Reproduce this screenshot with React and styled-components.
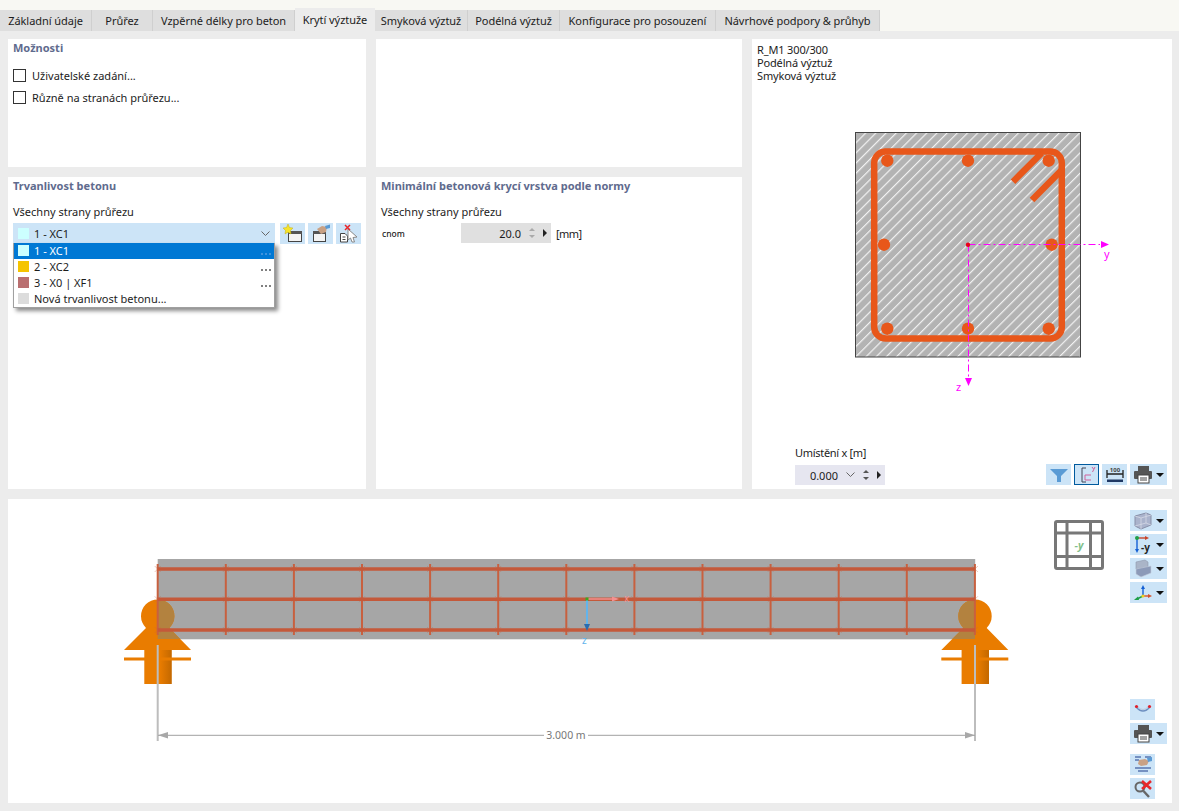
import styled, { createGlobalStyle } from "styled-components";

const GlobalStyle = createGlobalStyle`
  html, body {
    margin: 0;
    padding: 0;
    background: #ececec;
    font-family: "Noto Sans", "Liberation Sans", sans-serif;
    font-size: 11px;
    color: #1c1c1c;
  }
`;

const Page = styled.div`
  width: 1179px;
  height: 811px;
  overflow: hidden;
  display: flex;
  flex-direction: column;
  background: #ececec;
`;

const TabStrip = styled.div`
  height: 21px;
  padding-top: 10px;
  background: #f8f8f3;
  display: flex;
  align-items: stretch;
`;

const Tab = styled.div`
  width: ${(p) => p.$w}px;
  box-sizing: border-box;
  display: flex;
  align-items: center;
  justify-content: center;
  white-space: nowrap;
  letter-spacing: -0.05px;
  border-right: 1px solid #cfcfcf;
  background: ${(p) => (p.$active ? "#ececec" : "#dedede")};
  margin-top: ${(p) => (p.$active ? "-2px" : "0")};
  ${(p) => p.$active && "border-right: none;"}
`;

const Content = styled.div`
  flex: 1;
  padding: 8px 7px 8px 8px;
  display: grid;
  grid-template-columns: 358px 366px 420px;
  grid-template-rows: 128px 312px 304px;
  gap: 10px;
`;

const Panel = styled.div`
  background: #fff;
  padding: 1px 5px 4px;
  position: relative;
  display: flex;
  flex-direction: column;
  min-width: 0;
`;

const RightPanel = styled(Panel)`
  grid-column: 3;
  grid-row: 1 / span 2;
  padding-top: 4px;
`;

const BottomPanel = styled.div`
  grid-column: 1 / span 3;
  background: #fff;
  position: relative;
  overflow: hidden;
`;

const Title = styled.div`
  font-weight: 700;
  line-height: 15px;
  color: #5f6b8e;
`;

const Label = styled.div`
  line-height: 14px;
  margin-top: 12px;
`;

const CheckRow = styled.label`
  display: flex;
  align-items: center;
  gap: 6px;
  height: 13px;
  margin-top: ${(p) => p.$top}px;
`;

const CheckBox = styled.span`
  width: 13px;
  height: 13px;
  box-sizing: border-box;
  border: 1px solid #333;
  background: #fff;
`;

const ComboRow = styled.div`
  display: flex;
  gap: 3px;
  margin-top: 4px;
  position: relative;
`;

const Combo = styled.div`
  width: 262px;
  height: 21px;
  margin-right: 2px;
  background: #cce4f7;
  display: flex;
  align-items: center;
  padding: 0 5px;
  box-sizing: border-box;
  gap: 5px;
`;

const Swatch = styled.span`
  width: 11px;
  height: 11px;
  flex: none;
  background: ${(p) => p.$color};
`;

const ComboText = styled.span`
  flex: 1;
`;

const DropList = styled.div`
  position: absolute;
  top: 20px;
  left: 0;
  width: 262px;
  box-sizing: border-box;
  background: #fff;
  border: 1px solid #a0a0a0;
  border-top: none;
  box-shadow: 3px 3px 4px rgba(0, 0, 0, 0.45);
`;

const DropItem = styled.div`
  height: 16px;
  box-sizing: border-box;
  padding: 0 4px 1px;
  display: flex;
  align-items: center;
  gap: 5px;
  position: relative;
  background: ${(p) => (p.$selected ? "#0078d4" : "#fff")};
  color: ${(p) => (p.$selected ? "#fff" : "#1c1c1c")};
`;

const Dots = styled.span`
  position: absolute;
  right: 3px;
  bottom: 4px;
  display: flex;
  gap: 2px;
`;

const Dot = styled.span`
  width: 2px;
  height: 2px;
  background: ${(p) => (p.$selected ? "#3f93dd" : "#808080")};
`;

const IconButton = styled.div`
  width: ${(p) => (p.$wide ? 37 : 25)}px;
  height: 21px;
  flex: none;
  box-sizing: border-box;
  background: #cce4f7;
  display: flex;
  align-items: center;
  justify-content: flex-start;
  gap: 3px;
  padding-left: ${(p) => (p.$outlined ? 2 : 3)}px;
  border: ${(p) => (p.$outlined ? "1px solid #005a9e" : "none")};
  margin-top: ${(p) => p.$top || 0}px;
`;

const Caret = styled.span`
  width: 0;
  height: 0;
  border-left: 4px solid transparent;
  border-right: 4px solid transparent;
  border-top: 4px solid #111;
`;

const NomRow = styled.div`
  display: flex;
  align-items: center;
  margin-top: 4px;
  height: 20px;
`;

const NomLabel = styled.span`
  width: 80px;
  font-size: 8.5px;
  font-weight: 500;
  padding-left: 1px;
  box-sizing: border-box;
`;

const Spin = styled.div`
  width: 90px;
  height: 20px;
  box-sizing: border-box;
  background: ${(p) => p.$bg};
  display: flex;
  align-items: center;
  justify-content: flex-end;
  padding-right: 4px;
  gap: 8px;
`;

const SpinArrows = styled.span`
  display: flex;
  flex-direction: column;
  gap: 4px;
`;

const Tri = styled.span`
  width: 0;
  height: 0;
  border-left: 3px solid transparent;
  border-right: 3px solid transparent;
  ${(p) => (p.$down ? "border-top" : "border-bottom")}: 3px solid ${(p) => p.$color};
`;

const TriRight = styled.span`
  width: 0;
  height: 0;
  border-top: 4px solid transparent;
  border-bottom: 4px solid transparent;
  border-left: 4px solid #222;
`;

const Unit = styled.span`
  margin-left: 5px;
  letter-spacing: -0.6px;
`;

const Lines = styled.div`
  line-height: 13px;
  letter-spacing: -0.15px;
`;

const Figure = styled.svg`
  display: block;
  margin: 43px 0 0 88px;
`;

const FigureFooter = styled.div`
  margin-top: auto;
  display: flex;
  justify-content: space-between;
  align-items: flex-end;
  padding-left: 38px;
`;

const LocLabel = styled.div`
  line-height: 14px;
  margin-bottom: 5px;
  letter-spacing: -0.3px;
`;

const ButtonRow = styled.div`
  display: flex;
  gap: 3px;
`;

const Canvas = styled.svg`
  position: absolute;
  inset: 0;
  display: block;
`;

const ToolColumn = styled.div`
  position: absolute;
  left: 1122px;
  top: ${(p) => p.$top}px;
  display: flex;
  flex-direction: column;
  gap: 3px;
`;

const Ico = ({ children }) => (
  <svg width="20" height="19" viewBox="0 0 20 19">
    {children}
  </svg>
);

const Chevron = () => (
  <svg width="9" height="6" viewBox="0 0 9 6">
    <path d="M0.5 0.5 L4.5 4.5 L8.5 0.5" fill="none" stroke="#666" />
  </svg>
);

const NewIcon = () => (
  <Ico>
    <rect x="5.5" y="7.5" width="13" height="10" fill="#f4f4f4" stroke="#444" />
    <rect x="5" y="7" width="14" height="3" fill="#555" />
    <polygon points="5,0 6.5,3.5 10,4 7.5,6.5 8,10 5,8.2 2,10 2.5,6.5 0,4 3.5,3.5" fill="#f7e32a" stroke="#b9a400" strokeWidth="0.4" />
  </Ico>
);

const EditIcon = () => (
  <Ico>
    <rect x="2.5" y="7.5" width="12" height="10" fill="#f4f4f4" stroke="#444" />
    <rect x="2" y="7" width="13" height="3" fill="#555" />
    <path d="M6 5 L11 2 L16 3 L15 8 L10 10 Z" fill="#c9a184" />
    <path d="M14 2 L19 0.5 L19 4 L15 5 Z" fill="#5a9bd5" />
  </Ico>
);

const DeleteIcon = () => (
  <Ico>
    <path d="M1.5 9.5 H6 L8.5 12 V18 H1.5 Z" fill="#fff" stroke="#444" />
    <path d="M3.5 13 H6.5 M3.5 15.5 H6.5" stroke="#444" />
    <path d="M9 5 L18 13 L14 13.5 L15.5 18 L13 18 L11.5 14 L9 16 Z" fill="#fff" stroke="#888" />
    <path d="M6 1 L11 6 M11 1 L6 6" stroke="#e8262a" strokeWidth="1.5" />
  </Ico>
);

const FilterIcon = () => (
  <Ico>
    <path d="M1 4 H19 L12 11 V17 H8 V11 Z" fill="#5a9bd5" />
  </Ico>
);

const AxesIcon = () => (
  <Ico>
    <path d="M9 3 H5 V17 H9" fill="none" stroke="#445" />
    <path d="M8 10 H14 M8 10 V15 M8 15 H14" stroke="#d0609a" />
    <path d="M15 2 L16.5 4 M18 2 L15.5 7" stroke="#d0609a" />
  </Ico>
);

const DimIcon = () => (
  <Ico>
    <path d="M2 5 V13 M18 5 V13 M2 9 H18" stroke="#222" strokeWidth="1.3" fill="none" />
    <rect x="2" y="14.5" width="16" height="2.5" fill="#1f3864" />
    <text x="10" y="7" textAnchor="middle" fontSize="6" fontWeight="700" fill="#444" fontFamily="Noto Sans, sans-serif">100</text>
  </Ico>
);

const PrintIcon = () => (
  <Ico>
    <rect x="5" y="1" width="11" height="5" fill="#555" />
    <rect x="1" y="6" width="18" height="8" rx="1" fill="#555" />
    <rect x="5" y="10" width="11" height="8" fill="#fff" stroke="#444" />
    <path d="M7 13 H14 M7 15 H14" stroke="#444" />
  </Ico>
);

const CubeIcon = () => (
  <Ico>
    <path d="M2 5 L13 2 L18 4 V14 L8 18 L2 15 Z" fill="#aab3cc" stroke="#8890a8" />
    <path d="M2 5 L8 7 L18 4 M8 7 V18 M2 15 L13 12 V2 M13 12 L18 14" fill="none" stroke="#d5d9e6" strokeWidth="0.8" />
  </Ico>
);

const AxisYIcon = () => (
  <Ico>
    <path d="M4 3 H13" stroke="#c8452a" strokeWidth="1.4" />
    <path d="M12 1 L16 3 L12 5 Z" fill="#c8452a" />
    <path d="M4 3 V15" stroke="#1560d4" strokeWidth="1.4" />
    <path d="M2 14 L4 18 L6 14 Z" fill="#1560d4" />
    <circle cx="4" cy="3" r="2" fill="#1fa04a" />
    <text x="8" y="16" fontSize="10" fontWeight="700" fill="#222" fontFamily="Noto Sans, sans-serif">-y</text>
  </Ico>
);

const SlabIcon = () => (
  <Ico>
    <path d="M3 3 L12 1 L15 3 V8 L3 10 Z" fill="#aab5c8" stroke="#8e99ad" strokeWidth="0.6" />
    <path d="M3 10 L18 7 V14 L8 18 L3 15 Z" fill="#8c9ab8" stroke="#c4ccdc" strokeWidth="0.6" />
  </Ico>
);

const TriadIcon = () => (
  <Ico>
    <path d="M10 13 V5" stroke="#1560d4" strokeWidth="1.4" />
    <path d="M8 6 L10 2 L12 6 Z" fill="#1560d4" />
    <path d="M10 13 H16" stroke="#d6502a" strokeWidth="1.4" />
    <path d="M15 11 L19 13 L15 15 Z" fill="#d6502a" />
    <path d="M10 13 L4 16" stroke="#1fa04a" strokeWidth="1.4" />
    <path d="M5 13.5 L1 17 L6 17 Z" fill="#1fa04a" />
    <circle cx="10" cy="13" r="1.6" fill="#f0d020" />
  </Ico>
);

const DeflectionIcon = () => (
  <Ico>
    <path d="M3 7 Q10 15 17 7" stroke="#6d8fc0" strokeWidth="1.5" fill="none" />
    <path d="M5 7 Q10 12 15 7" stroke="#b9c8de" strokeWidth="1" fill="none" />
    <circle cx="3.5" cy="6.5" r="1.6" fill="#e0202a" />
    <circle cx="16.5" cy="6.5" r="1.6" fill="#e0202a" />
  </Ico>
);

const ReportIcon = () => (
  <Ico>
    <path d="M2 2 H8 M12 2 H18 M2 5 H6" stroke="#1f3f8c" />
    <path d="M6 5 L12 4 L16 6 L14 10 L8 11 L5 9 Z" fill="#c9a184" />
    <path d="M14 3 L19 2 V6 L15 7 Z" fill="#5a9bd5" />
    <path d="M2 13 H18 M5 16 H15" stroke="#1f3f8c" strokeWidth="1.2" />
  </Ico>
);

const ClearIcon = () => (
  <Ico>
    <circle cx="7" cy="8" r="4.5" fill="none" stroke="#666" strokeWidth="2" />
    <path d="M10.5 12 L16 18" stroke="#666" strokeWidth="2.4" />
    <path d="M9 2 L18 10 M18 2 L9 10" stroke="#e8262a" strokeWidth="2.6" />
  </Ico>
);

const BARS = [
  [887.3, 160.7], [968, 160.7], [1048.7, 160.7],
  [884, 244.7], [1051.7, 244.7],
  [887.3, 328.7], [968, 328.7], [1048.7, 328.7],
];

const MAGENTA = "#ff00ff";
const REBAR = "#e8571a";

const SectionDrawing = () => (
  <Figure width="280" height="270" viewBox="845 125 280 270">
    <defs>
      <pattern id="hatch" width="7.2" height="7.2" patternUnits="userSpaceOnUse" patternTransform="rotate(45)">
        <rect width="7.2" height="7.2" fill="#b3b3b3" />
        <rect width="1.2" height="7.2" fill="#f2f2f2" />
      </pattern>
    </defs>
    <rect x="855.5" y="132.5" width="225" height="224.5" fill="url(#hatch)" stroke="#444" />
    <path
      d="M885 151.5 H1050 A11.5 11.5 0 0 1 1061.8 163 V327 A11.5 11.5 0 0 1 1050 338.5 H886 A11.5 11.5 0 0 1 874.2 327 V163 A11.5 11.5 0 0 1 885 151.5 Z"
      fill="none"
      stroke={REBAR}
      strokeWidth="6.5"
    />
    <path d="M1041.7 153 L1013 181.7 M1061.7 170 L1032 200" stroke={REBAR} strokeWidth="6.5" fill="none" />
    {BARS.map(([x, y]) => (
      <circle key={`${x}-${y}`} cx={x} cy={y} r="6.2" fill={REBAR} />
    ))}
    <path d="M968.5 244.5 H1100 M968.5 244.5 V378" stroke={MAGENTA} strokeDasharray="7 3 2 3" fill="none" />
    <path d="M1101 241 L1109 244.5 L1101 248 Z M965 378 L968.5 386 L972 378 Z" fill={MAGENTA} />
    <circle cx="968" cy="244.7" r="2.2" fill="#e8001a" />
    <text x="1104" y="258" fontSize="11" fill={MAGENTA} fontFamily="Noto Sans, sans-serif">y</text>
    <text x="956" y="391" fontSize="11" fill={MAGENTA} fontFamily="Noto Sans, sans-serif">z</text>
  </Figure>
);

const SUPPORT = "M144.3 684 V650 H124 L146 628 A16.7 16.7 0 1 1 169.4 628 L191 650 H171.7 V684 Z";
const VERTICALS = Array.from({ length: 13 }, (_, i) => 157.7 + i * 68.1);
const HORIZONTALS = [569, 599.3, 630];

const Support = ({ x, clip }) => (
  <g transform={`translate(${x - 157.7} 0)`}>
    <path d={SUPPORT} fill="#e97c00" />
    <rect x="160" y="650" width="11.7" height="34" fill="url(#stemShade)" />
    <rect x="124" y="657.5" width="67" height="3" fill="#e97c00" />
    <g clipPath={clip}>
      <path d={SUPPORT} fill="#b3823f" />
    </g>
  </g>
);

const BeamView = () => (
  <Canvas width="1164" height="304" viewBox="8 499 1164 304">
    <defs>
      <clipPath id="leftOverlap">
        <rect x="157.7" y="559" width="60" height="80" />
      </clipPath>
      <clipPath id="rightOverlap">
        <rect x="97.7" y="559" width="60" height="80" />
      </clipPath>
      <linearGradient id="stemShade" x1="0" x2="1" y1="0" y2="0">
        <stop offset="0" stopColor="#8a4a00" stopOpacity="0" />
        <stop offset="1" stopColor="#8a4a00" stopOpacity="0.4" />
      </linearGradient>
    </defs>
    <rect x="157.7" y="559" width="817.5" height="80.3" fill="#a6a6a6" />
    <Support x={157.7} clip="url(#leftOverlap)" />
    <Support x={975} clip="url(#rightOverlap)" />
    {VERTICALS.map((x) => (
      <g key={x}>
        <path d={`M${x} 564 V635`} stroke="#c8603f" strokeWidth="2" />
        {HORIZONTALS.map((y) => (
          <path key={y} d={`M${x - 3} ${y - 3} L${x + 3} ${y + 3} M${x + 3} ${y - 3} L${x - 3} ${y + 3}`} stroke="#c8603f" strokeOpacity="0.35" />
        ))}
      </g>
    ))}
    {HORIZONTALS.map((y) => (
      <path key={y} d={`M157.7 ${y} H975`} stroke="#c4593a" strokeWidth="3.6" />
    ))}
    <path d="M157.7 645 V741 M975 645 V741" stroke="#bdbdbd" strokeWidth="2" />
    <path d="M158 735.3 H544 M588 735.3 H975" stroke="#a0a0a0" />
    <path d="M158 735.3 L168 732 V738.6 Z M975 735.3 L965 732 V738.6 Z" fill="#a8a8a8" />
    <text x="566" y="739" textAnchor="middle" fontSize="10.5" fill="#777" fontFamily="Noto Sans, sans-serif">3.000 m</text>

    <path d="M587 599 H614" stroke="#f49090" strokeWidth="1.5" />
    <path d="M612 596.5 L619 599 L612 601.5 Z" fill="#f49090" />
    <path d="M587 599 V626" stroke="#62b4ec" strokeWidth="2" />
    <path d="M584 624 L587 631 L590 624 Z" fill="#2a6cb0" />
    <rect x="585.5" y="597.5" width="3" height="3" fill="#3aa820" />
    <text x="624" y="602" fontSize="10" fill="#f49090" fontFamily="Noto Sans, sans-serif">x</text>
    <text x="582" y="644" fontSize="10" fill="#62b4ec" fontFamily="Noto Sans, sans-serif">z</text>

    <g stroke="#777" strokeWidth="3" fill="none" strokeLinejoin="round">
      <rect x="1055.5" y="521.5" width="47" height="47" rx="1.5" />
      <path d="M1067 521.5 V568.5 M1090.5 521.5 V568.5 M1055.5 533 H1102.5 M1055.5 556.5 H1102.5" />
    </g>
    <text x="1079" y="549" textAnchor="middle" fontSize="10.5" fontWeight="700" fontStyle="italic" fill="#7fbf8a" fontFamily="Noto Sans, sans-serif">-y</text>
  </Canvas>
);

const TABS = [
  ["Základní údaje", 92],
  ["Průřez", 61],
  ["Vzpěrné délky pro beton", 142],
  ["Krytí výztuže", 80],
  ["Smyková výztuž", 93],
  ["Podélná výztuž", 92],
  ["Konfigurace pro posouzení", 156],
  ["Návrhové podpory & průhyb", 164],
];

const DURABILITY = [
  { name: "1 - XC1", color: "#ccffff", selected: true, dots: true },
  { name: "2 - XC2", color: "#f5c400", dots: true },
  { name: "3 - X0 | XF1", color: "#b96f70", dots: true },
  { name: "Nová trvanlivost betonu...", color: "#dcdcdc" },
];

export default function App() {
  return (
    <Page>
      <GlobalStyle />
      <TabStrip>
        {TABS.map(([name, w]) => (
          <Tab key={name} $w={w} $active={name === "Krytí výztuže"}>
            {name}
          </Tab>
        ))}
      </TabStrip>
      <Content>
        <Panel>
          <Title>Možnosti</Title>
          <CheckRow $top={14}>
            <CheckBox />
            Uživatelské zadání...
          </CheckRow>
          <CheckRow $top={9}>
            <CheckBox />
            Různě na stranách průřezu...
          </CheckRow>
        </Panel>
        <Panel />
        <RightPanel>
          <Lines>
            <div>R_M1 300/300</div>
            <div>Podélná výztuž</div>
            <div>Smyková výztuž</div>
          </Lines>
          <SectionDrawing />
          <FigureFooter>
            <div>
              <LocLabel>Umístění x [m]</LocLabel>
              <Spin $bg="#e6e6f0">
                0.000
                <Chevron />
                <SpinArrows>
                  <Tri $color="#555" />
                  <Tri $down $color="#555" />
                </SpinArrows>
                <TriRight />
              </Spin>
            </div>
            <ButtonRow>
              <IconButton><FilterIcon /></IconButton>
              <IconButton $outlined><AxesIcon /></IconButton>
              <IconButton><DimIcon /></IconButton>
              <IconButton $wide><PrintIcon /><Caret /></IconButton>
            </ButtonRow>
          </FigureFooter>
        </RightPanel>
        <Panel>
          <Title>Trvanlivost betonu</Title>
          <Label>Všechny strany průřezu</Label>
          <ComboRow>
            <Combo>
              <Swatch $color="#ccffff" />
              <ComboText>1 - XC1</ComboText>
              <Chevron />
            </Combo>
            <IconButton><NewIcon /></IconButton>
            <IconButton><EditIcon /></IconButton>
            <IconButton><DeleteIcon /></IconButton>
            <DropList>
              {DURABILITY.map((item) => (
                <DropItem key={item.name} $selected={item.selected}>
                  <Swatch $color={item.color} />
                  {item.name}
                  {item.dots && (
                    <Dots>
                      <Dot $selected={item.selected} />
                      <Dot $selected={item.selected} />
                      <Dot $selected={item.selected} />
                    </Dots>
                  )}
                </DropItem>
              ))}
            </DropList>
          </ComboRow>
        </Panel>
        <Panel>
          <Title>Minimální betonová krycí vrstva podle normy</Title>
          <Label>Všechny strany průřezu</Label>
          <NomRow>
            <NomLabel>cnom</NomLabel>
            <Spin $bg="#e0e0e0">
              20.0
              <SpinArrows>
                <Tri $color="#aaa" />
                <Tri $down $color="#aaa" />
              </SpinArrows>
              <TriRight />
            </Spin>
            <Unit>[mm]</Unit>
          </NomRow>
        </Panel>
        <BottomPanel>
          <BeamView />
          <ToolColumn $top={11}>
            <IconButton $wide><CubeIcon /><Caret /></IconButton>
            <IconButton $wide><AxisYIcon /><Caret /></IconButton>
            <IconButton $wide><SlabIcon /><Caret /></IconButton>
            <IconButton $wide><TriadIcon /><Caret /></IconButton>
          </ToolColumn>
          <ToolColumn $top={200}>
            <IconButton><DeflectionIcon /></IconButton>
            <IconButton $wide><PrintIcon /><Caret /></IconButton>
            <IconButton $top={7}><ReportIcon /></IconButton>
            <IconButton><ClearIcon /></IconButton>
          </ToolColumn>
        </BottomPanel>
      </Content>
    </Page>
  );
}
